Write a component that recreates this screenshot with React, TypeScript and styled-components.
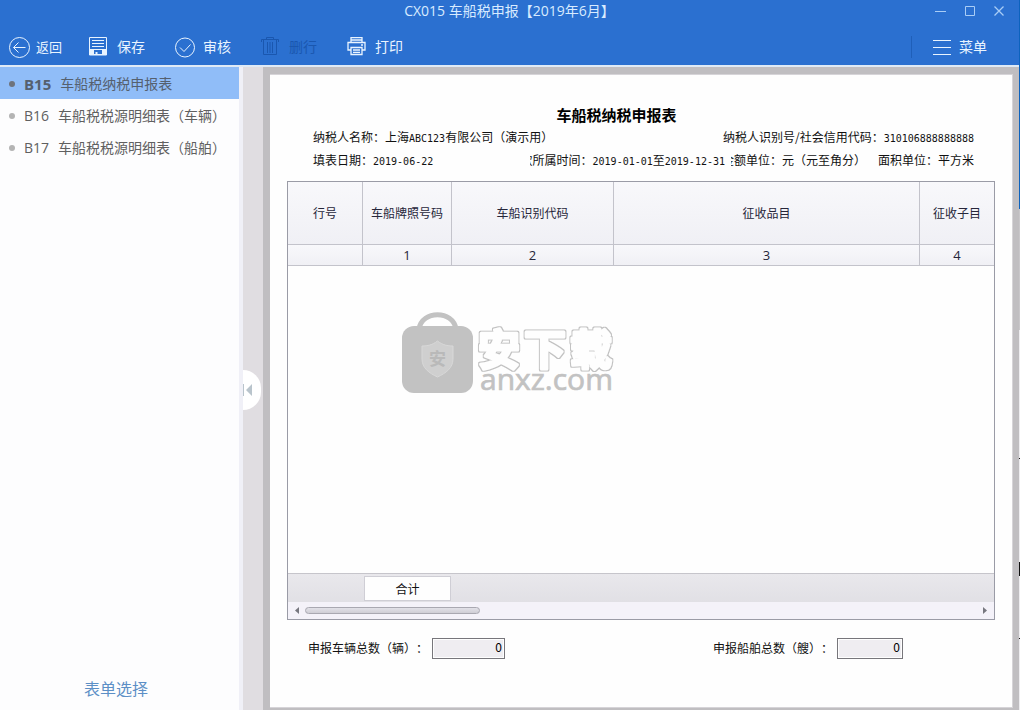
import React from "react";
import styled, { createGlobalStyle, css } from "styled-components";

const ui = `"Open Sans", "Noto Sans CJK SC", sans-serif`;
const form = `"Noto Sans CJK SC", sans-serif`;

const GlobalStyle = createGlobalStyle`
  *, *::before, *::after { box-sizing: border-box; }
  body { margin: 0; font-family: ${ui}; background: #fdfdfd; text-spacing-trim: space-all; }
  button, input { font: inherit; margin: 0; }
  button { border: 0; padding: 0; background: none; color: inherit; cursor: pointer; }
`;

const Screen = styled.div`
  display: flex;
  min-height: 100vh;
`;

const Desktop = styled.div`
  flex: 0 0 1px;
  background:
    linear-gradient(#111, #111) 0 458px / 1px 1px no-repeat,
    linear-gradient(#111, #111) 0 562px / 1px 14px no-repeat,
    linear-gradient(#111, #111) 0 638px / 1px 1px no-repeat,
    linear-gradient(#0d62bd 209px, #c9c7ca 209px 330px, #eeedf0 330px);
`;

const AppWindow = styled.div`
  flex: 1;
  min-width: 0;
  display: flex;
  flex-direction: column;
`;

const Header = styled.header`
  background: #2b70d0;
  color: #e9f4ff;
  border-bottom: 2px solid #dfeaf6;
`;

const TitleBar = styled.div`
  display: grid;
  grid-template-columns: 1fr auto 1fr;
  align-items: center;
  height: 22px;
  padding: 0 12px;
`;

const WindowTitle = styled.h1`
  grid-column: 2;
  margin: 0;
  font-size: 14px;
  line-height: 22px;
  font-weight: 400;
  color: #d8ebff;
`;

const WindowControls = styled.div`
  display: flex;
  justify-content: flex-end;
  gap: 13px;
  color: #a9cdf6;
`;

const WindowButton = styled.button`
  width: 16px;
  height: 20px;
  display: grid;
  place-items: center;
`;

const Toolbar = styled.div`
  display: flex;
  align-items: center;
  height: 43px;
  padding-top: 7px;
`;

const ToolButton = styled.button<{ $back?: boolean }>`
  display: flex;
  align-items: center;
  height: 32px;
  padding: ${(p) => (p.$back ? "0 12px 0 8px" : "0 15px")};
  font-size: ${(p) => (p.$back ? 13 : 14)}px;
  line-height: 20px;
  white-space: nowrap;
  &:disabled { color: #1a57af; }
  svg { flex: none; }
`;

const IconSlot = styled.span`
  display: flex;
  align-items: center;
  width: 28px;
`;

const MenuArea = styled.div`
  margin-left: auto;
  display: flex;
  align-items: center;
  padding-right: 17px;
  &::before {
    content: "";
    width: 1px;
    height: 22px;
    margin-right: 4px;
    background: #1f5fb9;
  }
`;

const Workspace = styled.div`
  flex: 1;
  display: flex;
`;

const Sidebar = styled.nav`
  flex: 0 0 243px;
  display: flex;
  flex-direction: column;
  justify-content: space-between;
  background: #fdfdfe;
  border-right: 4px solid #f0f0f7;
`;

const FormList = styled.ul`
  list-style: none;
  margin: 0;
  padding: 0;
`;

const FormLink = styled.a<{ $active?: boolean }>`
  display: flex;
  align-items: center;
  gap: 9px;
  height: 32px;
  padding: 2px 0 0 9px;
  font-size: 14px;
  line-height: 20px;
  color: #606060;
  text-decoration: none;
  white-space: nowrap;
  &::before {
    content: "";
    width: 6px;
    height: 6px;
    border-radius: 50%;
    background: #b4b4b4;
  }
  ${(p) =>
    p.$active &&
    css`
      background: #90bdf8;
      color: #55606e;
      &::before { background: #6e737c; }
    `}
`;

const FormCode = styled.span<{ $active?: boolean }>`
  font-size: ${(p) => (p.$active ? 15 : 14)}px;
  font-weight: ${(p) => (p.$active ? 700 : 400)};
`;

const PickForms = styled.button`
  align-self: center;
  margin: 0 7px 9px 0;
  font-size: 16px;
  line-height: 24px;
  color: #5c8fc6;
`;

const Gutter = styled.div`
  flex: 0 0 20px;
  display: flex;
  align-items: center;
  padding-top: 2px;
  background: #e0dde1;
`;

const CollapseButton = styled.button`
  width: 18px;
  height: 40px;
  border-radius: 0 20px 20px 0;
  background: #fff;
  display: flex;
  align-items: center;
`;

const Desk = styled.main`
  flex: 1;
  min-width: 0;
  display: flex;
  padding: 7px 6px 2px 7px;
  background: #c0bec1;
`;

const Paper = styled.section`
  flex: 1;
  min-width: 0;
  display: flex;
  flex-direction: column;
  padding: 29px 17px 48px;
  background: #fefefe;
  border: 1px solid #d6d4d8;
  border-width: 1px 1px 1px 0;
  font-family: ${form};
  font-size: 12px;
  line-height: 22px;
  color: #111;
`;

const FormTitle = styled.h2`
  margin: 0;
  padding-right: 49px;
  font-size: 15px;
  line-height: 22px;
  font-weight: 700;
  text-align: center;
  color: #000;
`;

const InfoRow = styled.div`
  display: flex;
  justify-content: space-between;
  height: 23px;
  padding: 0 21px 0 26px;
  line-height: 22px;
  white-space: nowrap;
`;

const InfoGroup = styled.div`
  display: flex;
  gap: 6px;
`;

/* Fields hold their right edge; a caption that is too long loses its first character. */
const ClippedField = styled.span<{ $width: number }>`
  display: flex;
  justify-content: flex-end;
  width: ${(p) => p.$width}px;
  overflow: hidden;
  white-space: pre;
`;

const Latin = styled.span`
  font-family: "DejaVu Sans Mono", monospace;
  font-size: 10px;
  line-height: 1;
`;

const Grid = styled.div`
  flex: 1;
  display: flex;
  flex-direction: column;
  margin-top: 9px;
  border: 1px solid #9a9ba6;
`;

const GridTable = styled.table`
  width: 100%;
  table-layout: fixed;
  border-collapse: separate;
  border-spacing: 0;
  color: #26263a;
  line-height: 18px;
  th, td {
    padding: 0;
    font-weight: 400;
    text-align: center;
    white-space: nowrap;
    background: linear-gradient(#f8f8fb, #f0f0f5);
    border: 0 solid #c3c3cb;
    border-width: 0 1px 1px 0;
  }
  th { height: 63px; }
  td {
    height: 21px;
    font-family: "Open Sans", sans-serif;
    font-size: 13px;
  }
  th:last-child, td:last-child { border-right: 0; }
`;

const Col = styled.col<{ $width?: number }>`
  width: ${(p) => (p.$width ? p.$width + "px" : "auto")};
`;

const GridBody = styled.div`
  flex: 1;
  min-height: 180px;
  padding: 44px 0 0 112px;
  svg { display: block; }
`;

const TotalsRow = styled.div`
  height: 29px;
  padding: 2px 0 2px 76px;
  background: linear-gradient(#e9e8ec, #e1e0e5);
  border-top: 1px solid #c6c5cb;
`;

const TotalCell = styled.div`
  width: 87px;
  height: 25px;
  line-height: 23px;
  text-align: center;
  background: #fefefe;
  border: 1px solid #cfced5;
`;

const ScrollBar = styled.div`
  display: flex;
  align-items: center;
  height: 17px;
  padding: 0 6px;
  background: #f4f2f9;
`;

const ScrollArrow = styled.button`
  display: flex;
  width: 5px;
  height: 9px;
`;

const ScrollTrack = styled.div`
  flex: 1;
  padding: 0 6px;
`;

const ScrollThumb = styled.div`
  width: 26%;
  height: 7px;
  border: 1px solid #a9a8b1;
  border-radius: 4px;
  background: linear-gradient(#e2e1e8, #cfced5);
`;

const Summary = styled.div`
  display: flex;
  justify-content: space-between;
  padding: 17px 92px 0 21px;
`;

const SummaryField = styled.label`
  display: flex;
  align-items: center;
  gap: 4px;
  white-space: nowrap;
`;

const SummaryInput = styled.input<{ $width: number }>`
  width: ${(p) => p.$width}px;
  height: 21px;
  padding: 0 2px 2px;
  border: 1px solid #77767b;
  border-radius: 0;
  box-shadow: inset 0 0 0 1px #fefefe;
  background: #efedf1;
  color: #000;
  text-align: right;
  outline: 0;
`;

const line = { fill: "none", stroke: "currentColor" };

const BackIcon = () => (
  <svg width="23" height="22" viewBox="0 0 23 22" {...line}>
    <circle cx="11.5" cy="11.5" r="10" />
    <path d="M17.5 11.5h-12M10.5 6.5l-5 5 5 5" />
  </svg>
);

const SaveIcon = () => (
  <svg width="18" height="20" viewBox="0 1 18 20" {...line}>
    <path d="M.5 1.500h17v17.500h-17zM3 4.500h12M3 7.500h12M3 10.500h12" />
    <path fill="currentColor" stroke="none" fillRule="evenodd" d="M1 13h16v6H1zM5 14v4h8v-4z" />
    <path d="M7.500 16v2.500" strokeWidth="2" />
  </svg>
);

const AuditIcon = () => (
  <svg width="21" height="21" viewBox="0 0 21 21" {...line}>
    <circle cx="10" cy="10.500" r="9.500" />
    <path d="M5 10.500l4 4 6.500-7" />
  </svg>
);

const DeleteIcon = () => (
  <svg width="18" height="20" viewBox="0 1 18 20" {...line}>
    <path d="M.5 6V3.500h17V6M5.500 3V1.500h7V3M2.500 4v14.500h13V4M6.500 6v11M9 6v11M11.500 6v11" />
  </svg>
);

const PrintIcon = () => (
  <svg width="19" height="20" viewBox="0 1 19 20" fill="none" stroke="currentColor" strokeWidth="1.300">
    <path d="M4 6V1.500h11V6M4 14H1V6.500h17V14h-3" />
    <path d="M4 11.500h11v7H4zM4 4h11M6 14h7M6 16.300h7M14 9h2" />
  </svg>
);

const MenuIcon = () => (
  <svg width="20" height="15" viewBox="0 0 20 15" {...line}>
    <path d="M2 .5h18M2 7.500h18M2 14.500h18" />
  </svg>
);

const Watermark = () => (
  <svg width="218" height="88" viewBox="0 0 218 88" role="img" aria-label="安下载 anxz.com">
    <defs>
      <filter id="outline" x="-5%" y="-10%" width="110%" height="120%">
        <feMorphology in="SourceAlpha" operator="dilate" radius="1" result="outer" />
        <feFlood floodColor="#c2c2c2" />
        <feComposite in2="outer" operator="in" result="edge" />
        <feMerge>
          <feMergeNode in="edge" />
          <feMergeNode in="SourceGraphic" />
        </feMerge>
      </filter>
    </defs>
    <path d="M19 19C22 0 53 0 56 19" fill="none" stroke="#c2c2c2" strokeWidth="5" />
    <rect x="2" y="16" width="71" height="67" rx="12" fill="#c2c2c2" />
    <path d="M37.500 31c5 4 10 5 15.500 5v13c0 9-7 14-15.500 18C29 63 22 58 22 49V36c5.500 0 10.500-1 15.500-5z" fill="#cfcfcf" stroke="#d8d8d8" />
    <text x="37.500" y="55" textAnchor="middle" fontFamily="Noto Sans CJK SC" fontSize="17" fontWeight="700" fill="#b9b9b9">安</text>
    <text
      x="78 124 170"
      y="55"
      fontFamily="Noto Sans CJK SC"
      fontSize="42"
      fontWeight="700"
      fill="#fefefe"
      stroke="#fefefe"
      strokeWidth="3"
      strokeLinejoin="round"
      filter="url(#outline)"
    >
      安下载
    </text>
    <text x="80" y="80" fontFamily="Open Sans" fontSize="30" fill="#c2c2c2" stroke="#c2c2c2" strokeWidth=".7">anxz.com</text>
  </svg>
);

const forms = [
  { code: "B15", name: "车船税纳税申报表" },
  { code: "B16", name: "车船税税源明细表（车辆）" },
  { code: "B17", name: "车船税税源明细表（船舶）" },
];

const tools = [
  { label: "保存", icon: <SaveIcon /> },
  { label: "审核", icon: <AuditIcon /> },
  { label: "删行", icon: <DeleteIcon />, disabled: true },
  { label: "打印", icon: <PrintIcon /> },
];

const columns = [
  { title: "行号", index: "", width: 75 },
  { title: "车船牌照号码", index: "1", width: 89 },
  { title: "车船识别代码", index: "2", width: 162 },
  { title: "征收品目", index: "3" },
  { title: "征收子目", index: "4", width: 74 },
];

export default function App() {
  return (
    <Screen>
      <GlobalStyle />
      <AppWindow>
        <Header>
          <TitleBar>
            <WindowTitle>CX015 车船税申报【2019年6月】</WindowTitle>
            <WindowControls>
              <WindowButton aria-label="最小化">
                <svg width="12" height="12" {...line}><path d="M0 6.500h11" /></svg>
              </WindowButton>
              <WindowButton aria-label="最大化">
                <svg width="12" height="12" {...line}><path d="M1.500 1.500h9v9h-9z" /></svg>
              </WindowButton>
              <WindowButton aria-label="关闭">
                <svg width="12" height="12" {...line} strokeWidth="1.300"><path d="M1.500 1.500l9 9M10.500 1.500l-9 9" /></svg>
              </WindowButton>
            </WindowControls>
          </TitleBar>
          <Toolbar>
            <ToolButton $back>
              <IconSlot><BackIcon /></IconSlot>返回
            </ToolButton>
            {tools.map((t) => (
              <ToolButton key={t.label} disabled={t.disabled}>
                <IconSlot>{t.icon}</IconSlot>{t.label}
              </ToolButton>
            ))}
            <MenuArea>
              <ToolButton>
                <IconSlot><MenuIcon /></IconSlot>菜单
              </ToolButton>
            </MenuArea>
          </Toolbar>
        </Header>
        <Workspace>
          <Sidebar>
            <FormList>
              {forms.map((f, i) => (
                <li key={f.code}>
                  <FormLink href={"#" + f.code} $active={i === 0}>
                    <FormCode $active={i === 0}>{f.code}</FormCode>
                    <span>{f.name}</span>
                  </FormLink>
                </li>
              ))}
            </FormList>
            <PickForms>表单选择</PickForms>
          </Sidebar>
          <Gutter>
            <CollapseButton aria-label="收起">
              <svg width="10" height="12" viewBox="0 0 10 12" fill="#b9c4cc">
                <path d="M0 0h1v12H0zM9 0v12L3 6z" />
              </svg>
            </CollapseButton>
          </Gutter>
          <Desk>
            <Paper>
              <FormTitle>车船税纳税申报表</FormTitle>
              <InfoRow>
                <span>纳税人名称：上海<Latin>ABC123</Latin>有限公司（演示用）</span>
                <span>纳税人识别号/社会信用代码：<Latin>310106888888888</Latin></span>
              </InfoRow>
              <InfoRow>
                <span>填表日期：<Latin>2019-06-22</Latin></span>
                <InfoGroup>
                  <ClippedField $width={195}>
                    <span>款所属时间：<Latin>2019-01-01</Latin>至<Latin>2019-12-31</Latin></span>
                  </ClippedField>
                  <ClippedField $width={243}>
                    <span>金额单位：元（元至角分）{"\u2003"}面积单位：平方米</span>
                  </ClippedField>
                </InfoGroup>
              </InfoRow>
              <Grid>
                <GridTable>
                  <colgroup>
                    {columns.map((c) => <Col key={c.title} $width={c.width} />)}
                  </colgroup>
                  <thead>
                    <tr>{columns.map((c) => <th key={c.title} scope="col">{c.title}</th>)}</tr>
                  </thead>
                  <tbody>
                    <tr>{columns.map((c) => <td key={c.title}>{c.index}</td>)}</tr>
                  </tbody>
                </GridTable>
                <GridBody><Watermark /></GridBody>
                <TotalsRow><TotalCell>合计</TotalCell></TotalsRow>
                <ScrollBar>
                  <ScrollArrow aria-label="向左">
                    <svg width="5" height="9" fill="#77777f"><path d="M5 1v7L1 4.500z" /></svg>
                  </ScrollArrow>
                  <ScrollTrack><ScrollThumb /></ScrollTrack>
                  <ScrollArrow aria-label="向右">
                    <svg width="5" height="9" fill="#77777f"><path d="M0 1v7l4-3.500z" /></svg>
                  </ScrollArrow>
                </ScrollBar>
              </Grid>
              <Summary>
                <SummaryField>
                  申报车辆总数（辆）：
                  <SummaryInput $width={73} defaultValue="0" readOnly />
                </SummaryField>
                <SummaryField>
                  申报船舶总数（艘）：
                  <SummaryInput $width={66} defaultValue="0" readOnly />
                </SummaryField>
              </Summary>
            </Paper>
          </Desk>
        </Workspace>
      </AppWindow>
      <Desktop />
    </Screen>
  );
}
